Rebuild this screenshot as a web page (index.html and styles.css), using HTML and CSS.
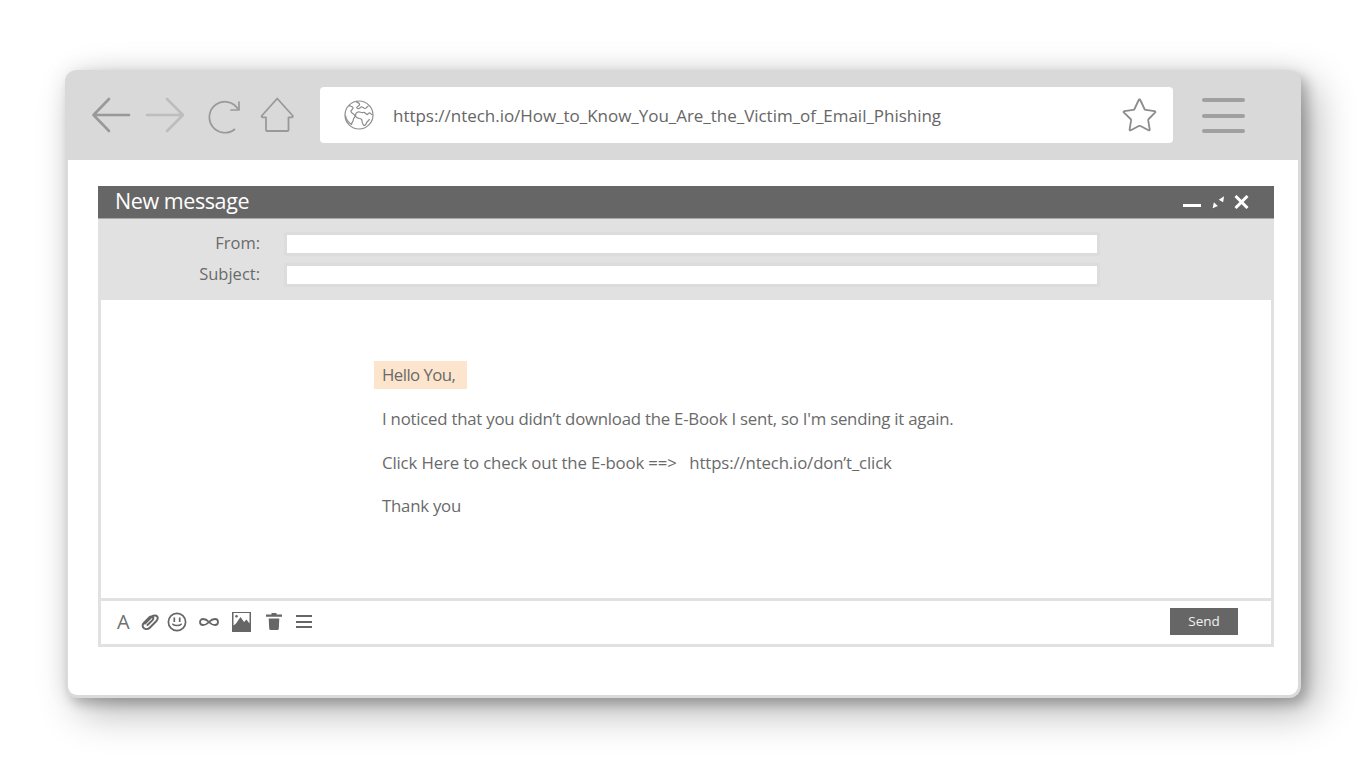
FILE: index.html
```html
<!DOCTYPE html>
<html lang="en">
<head>
<meta charset="utf-8">
<title>New message</title>
<link rel="stylesheet" href="styles.css">
</head>
<body>
<main class="window">
  <header class="chrome">
    <nav class="nav">
      <svg class="ic-arrow" viewBox="0 0 40 36"><path d="M38 18H3M18 2 2.500 18 18 34" fill="none" stroke="#999" stroke-width="2.600" stroke-linecap="round" stroke-linejoin="round"/></svg>
      <svg class="ic-arrow fwd" viewBox="0 0 40 36"><path d="M2 18h35.500M22 2l16 16-16 16" fill="none" stroke="#bdbdbd" stroke-width="2.600" stroke-linecap="round" stroke-linejoin="round"/></svg>
      <svg class="ic-reload" viewBox="0 0 34 38"><path d="M27 32A15.500 15.500 0 1 1 30 12" fill="none" stroke="#999" stroke-width="1.700"/><path d="M31 5v8h-8" fill="none" stroke="#999" stroke-width="1.700" stroke-linejoin="round" stroke-linecap="round"/></svg>
      <svg class="ic-home" viewBox="0 0 34 36"><path d="M17.200 1.500 32.500 18.500q1 1.500-1 1.800H28.500V33q0 1-1 1H7q-1 0-1-1V20.300H3q-2-.3-1-1.800Z" fill="none" stroke="#999" stroke-width="1.800" stroke-linejoin="round"/></svg>
    </nav>
    <div class="url">
      <svg class="ic-globe" viewBox="0 0 30 30"><g fill="none" stroke="#8c8c8c" stroke-width="1.200" stroke-linejoin="round"><circle cx="15" cy="15" r="14"/><path d="M5 5.500c1.500 1 3 .5 4 2 .7 1.500-1.500 2-2 3.500s1.500 2.500 3 3.500 1 2.500 0 3.500-.5 3-1.500 4-.5 2-1 2.500C4.500 22.500 2 19 1.500 15.500M12 1.500c1.500 1.500 3 1 3.500 2.500s-1.500 2.500-2.500 3 .5 2 2 1.500 1.500-2 3-1.500 1.500 1.500 3 1.500 2-2.500 3.500-2M28.500 15c-1.500-.5-2-2.500-3.500-2s-1 2-2 1.500-2.500-2.500-4-2-3.500-1-5-.5-2.500 2-2.500 3.500 2 3 4 3 2.500 1 2.500 2.500.5 3 1.500 4 2.500-.5 3-2 2.500-2.500 3-4"/></g></svg>
      <span class="url-text">https://ntech.io/How_to_Know_You_Are_the_Victim_of_Email_Phishing</span>
      <svg class="ic-star" viewBox="0 0 36 34"><path d="M18 1.500q1 0 1.500 1L23.500 11q.4.800 1.300.9l8.700 1.300q1.600.3.500 1.500l-6.300 6.300q-.6.600-.5 1.400l1.500 9q.2 1.500-1.200.8l-8-4.200q-.9-.4-1.700 0l-8 4.200q-1.400.7-1.200-.8l1.500-9q.1-.8-.5-1.400L3 14.700q-1.100-1.200.5-1.500l8.700-1.300q.9-.1 1.300-.9l4-8.500q.5-1 1.500-1Z" fill="none" stroke="#8c8c8c" stroke-width="1.800" stroke-linejoin="round"/></svg>
    </div>
    <div class="burger"><i></i><i></i><i></i></div>
  </header>
  <div class="content">
    <section class="compose">
      <div class="titlebar">
        <h1 class="title">New message</h1>
        <div class="controls">
          <span class="minimize"></span>
          <svg class="ic-resize" viewBox="0 0 14 14"><path d="M13 .7 7.300 4.700 12 7.300ZM.7 13.700 6.300 11.300 2 7.300Z" fill="#fff"/></svg>
          <svg class="ic-close" viewBox="0 0 15 14"><path d="M1.500 1l12 12M13.500 1l-12 12" stroke="#fff" stroke-width="3"/></svg>
        </div>
      </div>
      <div class="fields">
        <div class="field"><label class="label">From:</label><div class="input"></div></div>
        <div class="field"><label class="label">Subject:</label><div class="input"></div></div>
      </div>
      <div class="message">
        <p class="hello">Hello You,</p>
        <p class="line">I noticed that you didn’t download the E-Book I sent, so I'm sending it again.</p>
        <p class="line wide">Click Here to check out the E-book ==&gt;&nbsp;&nbsp; https://ntech.io/don’t_click</p>
        <p class="line">Thank you</p>
      </div>
      <div class="actions">
        <div class="tools">
          <span class="tool-a">A</span>
          <svg class="t-clip" viewBox="0 0 18 16"><path d="M4 9.500 10.500 3c1.800-1.800 4.500-1.800 5.500-.8s1 3.300-.8 5L9 13.500c-1.800 1.800-4.500 2-6 .8S1 10.800 2.800 9l5.700-5.700c1.300-1.200 3-.8 3.500 0s.4 1.800-.5 2.800L6.500 11" fill="none" stroke="#666" stroke-width="2" stroke-linecap="round"/></svg>
          <svg class="t-smile" viewBox="0 0 20 20"><circle cx="10" cy="10" r="8.600" fill="none" stroke="#666" stroke-width="1.700"/><path d="M7.300 5.500v4.500M12.700 5.500v4.500" stroke="#666" stroke-width="1.700"/><path d="M5.800 12.200c1.500 1.800 6.900 1.800 8.400 0" fill="none" stroke="#666" stroke-width="1.500" stroke-linecap="round"/></svg>
          <svg class="t-inf" viewBox="0 0 22 8"><path d="M11 4C9 1.800 7.500 1 5 1a3 3 0 0 0 0 6c2.500 0 4-.8 6-3s3.500-3 6-3a3 3 0 0 1 0 6c-2.500 0-4-.8-6-3Z" fill="none" stroke="#666" stroke-width="1.800"/></svg>
          <svg class="t-img" viewBox="0 0 19 20"><path d="M0 0h19v20H0Z" fill="#666"/><path d="M1.500 1h16v10.500l-3-4-2.500 2.500L8.500 5 4 11.500l-2.500 2Z" fill="#fff"/><circle cx="4.500" cy="4.300" r="1.300" fill="#666"/></svg>
          <svg class="t-trash" viewBox="0 0 16 17"><path d="M5.500 0h5v1.500H16v2.200H0V1.500h5.500ZM2.700 5.500h10.600l-.5 10q-.1 1.500-1.500 1.500H4.700q-1.400 0-1.500-1.500Z" fill="#666"/></svg>
          <div class="t-lines"><i></i><i></i><i></i></div>
        </div>
        <button class="send" type="button">Send</button>
      </div>
    </section>
  </div>
</main>
</body>
</html>
```
FILE: styles.css
```css
* { box-sizing: border-box; }
html, body { margin: 0; height: 768px; overflow: hidden; background: #fff; }
body { padding: 70px 0 0 65px; font-family: "Open Sans", "Noto Sans", sans-serif; color: #6a6a6a; }

.window {
  width: 1236px;
  height: 628px;
  background: #fff;
  border-radius: 12px;
  border: solid #dadada;
  border-width: 0 3px 3px 3px;
  box-shadow: 6px 6px 12px rgba(0, 0, 0, .2), 14px 14px 40px rgba(0, 0, 0, .3), 0 0 22px rgba(0, 0, 0, .07);
  display: flex;
  flex-direction: column;
}
.chrome {
  height: 90px;
  margin: 0 -3px;
  background: #d9d9d9;
  border-radius: 12px 12px 0 0;
  padding: 17px 0 0 26px;
  display: flex;
  align-items: flex-start;
}
.nav { display: flex; align-items: flex-start; width: 229px; padding-top: 10px; }
.ic-arrow { width: 40px; height: 36px; margin-right: 14px; flex: none; }
.fwd { margin-right: 23px; }
.ic-reload { width: 34px; height: 38px; margin-right: 18px; flex: none; }
.ic-home { width: 34px; height: 36px; flex: none; }

.url {
  width: 853px;
  height: 56px;
  background: #fff;
  border-radius: 4px;
  display: flex;
  align-items: center;
  padding: 0 16px 0 24px;
}
.ic-globe { width: 30px; height: 30px; flex: none; }
.url-text { margin-left: 19px; font-size: 17px; letter-spacing: -.03px; color: #666; flex: 1; white-space: nowrap; }
.ic-star { width: 36px; height: 34px; flex: none; }

.burger { margin: 11px 0 0 29px; width: 43px; display: flex; flex-direction: column; gap: 11.500px; }
.burger i { display: block; height: 4px; background: #a0a0a0; border-radius: 2px; }

.content { padding: 26px 25px 0 30px; }
.compose { width: 1176px; }
.titlebar {
  height: 33px;
  background: #666;
  border-bottom: 1px solid #a8a8a8;
  display: flex;
  align-items: center;
  justify-content: space-between;
  padding: 0 25px 2px 17px;
}
.title { margin: 0; font-size: 21.500px; font-weight: 400; color: #fff; letter-spacing: -.42px; line-height: 30px; }
.controls { display: flex; align-items: flex-start; height: 14px; margin-top: 1px; }
.minimize { width: 18px; height: 3.500px; background: #fff; margin: 9px 11px 0 0; }
.ic-resize { width: 13px; height: 14px; margin-right: 9px; }
.ic-close { width: 15px; height: 14px; }

.fields {
  height: 81px;
  background: #e1e1e1;
  padding-top: 13px;
  display: flex;
  flex-direction: column;
  gap: 7px;
}
.field { display: flex; align-items: center; height: 24px; }
.label { width: 162px; padding-bottom: 3px; text-align: right; font-size: 16.500px; letter-spacing: 0; color: #6a6a6a; }
.input { margin-left: 24px; width: 816px; height: 24px; background: #fff; border: 3px solid #dcdcdc; }

.message {
  height: 298px;
  background: #fff;
  border: solid #e1e1e1;
  border-width: 0 3px;
  padding: 61px 0 0 273px;
  font-size: 16.800px;
  letter-spacing: -.23px;
  color: #6a6a6a;
}
.hello {
  margin: 0 0 16px;
  width: 93px;
  height: 28px;
  background: #fde5cd;
  line-height: 28px;
  padding-left: 8px;
  letter-spacing: -.55px;
  white-space: nowrap;
}
.line { margin: 0 0 0 8px; height: 43.500px; line-height: 28px; white-space: nowrap; }
.wide { letter-spacing: -.14px; }

.actions {
  height: 49px;
  border: solid #e1e1e1;
  border-width: 3px;
  display: flex;
  align-items: center;
  justify-content: space-between;
  padding: 0 33px 2px 16px;
}
.tools { display: flex; align-items: center; }
.tool-a { font-size: 20px; font-weight: 400; width: 15px; line-height: 20px; color: #707070; margin-right: 9px; }
.t-clip { width: 18px; height: 16px; margin-right: 8px; }
.t-smile { width: 20px; height: 20px; margin-right: 11px; }
.t-inf { width: 22px; height: 8px; margin-right: 12px; }
.t-img { width: 19px; height: 20px; margin-right: 15px; }
.t-trash { width: 16px; height: 17px; margin-right: 14px; }
.t-lines { width: 16px; display: flex; flex-direction: column; gap: 3.500px; }
.t-lines i { display: block; height: 2px; background: #666; }

.send {
  width: 68px;
  height: 27px;
  border: 0;
  padding: 0 0 1px;
  background: #666;
  color: #f2f2f2;
  font-family: "Open Sans", sans-serif;
  font-size: 13.500px;
}
```
